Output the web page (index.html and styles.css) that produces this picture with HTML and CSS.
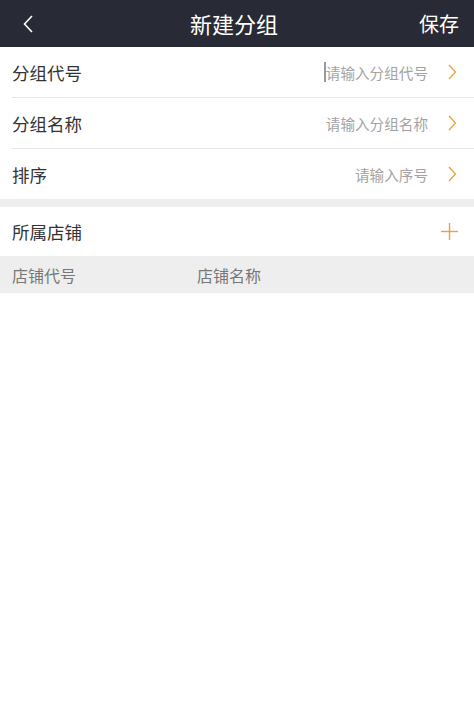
FILE: index.html
```html
<!DOCTYPE html>
<html lang="zh-CN">
<head>
    <meta charset="UTF-8">
    <meta name="viewport" content="width=device-width, initial-scale=1.0">
    <title>新建分组</title>
    <link rel="stylesheet" href="styles.css">
</head>
<body>

    <header class="nav">
        <a class="nav-back" href="#">
            <svg width="10" height="18" viewBox="0 0 10 18">
                <polyline points="9,1 1.5,9 9,17" fill="none" stroke="#ffffff" stroke-width="1.6" />
            </svg>
        </a>
        <h1 class="nav-title">新建分组</h1>
        <a class="nav-save" href="#">保存</a>
    </header>

    <!-- 分组信息 -->
    <div class="form">
        <div class="field">
            <span class="field-label">分组代号</span>
            <span class="field-value"><i class="caret"></i>请输入分组代号</span>
            <svg class="arrow" width="9" height="16" viewBox="0 0 9 16">
                <polyline points="1,1 7.5,8 1,15" fill="none" stroke="#e9a23b" stroke-width="1.3" />
            </svg>
        </div>
        <div class="field">
            <span class="field-label">分组名称</span>
            <span class="field-value">请输入分组名称</span>
            <svg class="arrow" width="9" height="16" viewBox="0 0 9 16">
                <polyline points="1,1 7.5,8 1,15" fill="none" stroke="#e9a23b" stroke-width="1.3" />
            </svg>
        </div>
        <div class="field last">
            <span class="field-label">排序</span>
            <span class="field-value">请输入序号</span>
            <svg class="arrow" width="9" height="16" viewBox="0 0 9 16">
                <polyline points="1,1 7.5,8 1,15" fill="none" stroke="#e9a23b" stroke-width="1.3" />
            </svg>
        </div>
    </div>

    <div class="spacer"></div>

    <!-- 所属店铺 -->
    <div class="section">
        <span class="section-title">所属店铺</span>
        <svg class="add" width="17" height="17" viewBox="0 0 17 17">
            <line x1="8.5" y1="0" x2="8.5" y2="17" stroke="#e9a23b" stroke-width="1.4" />
            <line x1="0" y1="8.5" x2="17" y2="8.5" stroke="#e9a23b" stroke-width="1.4" />
        </svg>
    </div>

    <div class="table-head">
        <span class="col-code">店铺代号</span>
        <span class="col-name">店铺名称</span>
    </div>

</body>
</html>
```

FILE: styles.css
```css
body {
    margin: 0;
    padding: 0;
    background-color: #ffffff;
    font-family: "Noto Sans CJK SC", "Noto Sans", sans-serif;
    color: #333;
}

/* top bar */
.nav {
    height: 47px;
    background-color: #282a36;
    display: grid;
    grid-template-columns: 1fr auto 1fr;
    align-items: center;
    padding: 0 15px;
}

.nav-back {
    display: flex;
    align-items: center;
    margin-left: 8px;
}

.nav-title {
    margin: 0 0 0 -6px;
    font-size: 22px;
    font-weight: normal;
    color: #ffffff;
    line-height: 47px;
}

.nav-save {
    justify-self: end;
    font-size: 20px;
    color: #ffffff;
    text-decoration: none;
}

/* form rows */
.field {
    height: 50px;
    margin-left: 12px;
    padding-right: 17px;
    border-bottom: 1px solid #e6e6e6;
    display: flex;
    align-items: center;
}

.field.last {
    border-bottom: none;
}

.field-label {
    font-size: 17.5px;
    color: #333;
}

.field-value {
    margin-left: auto;
    margin-right: 20px;
    font-size: 14.6px;
    color: #a3a3a3;
    display: flex;
    align-items: center;
}

.caret {
    width: 2px;
    height: 20px;
    background-color: #9a9a9a;
}

.arrow {
    display: block;
}

.spacer {
    height: 8px;
    background-color: #eeeeee;
}

/* shops */
.section {
    height: 49px;
    padding: 0 16px 0 12px;
    display: flex;
    align-items: center;
    justify-content: space-between;
}

.section-title {
    font-size: 17.5px;
    color: #333;
}

.add {
    display: block;
}

.table-head {
    height: 37px;
    background-color: #eeeeee;
    display: flex;
    align-items: center;
    padding-left: 12px;
    font-size: 16px;
    color: #777;
}

.col-code {
    width: 185px;
}
```
